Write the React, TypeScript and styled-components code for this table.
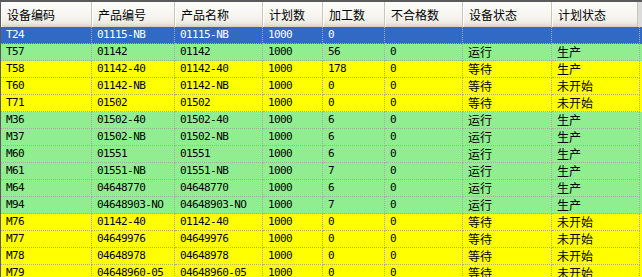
import React from "react";
import styled, { createGlobalStyle } from "styled-components";

const GlobalStyle = createGlobalStyle`
  html, body {
    margin: 0;
    padding: 0;
    background: #ffffff;
  }
`;

type Tone = "selected" | "run" | "wait";

interface Row {
  code: string;
  product: string;
  name: string;
  plan: string;
  done: string;
  bad: string;
  device: string;
  state: string;
  tone: Tone;
}

const COLS = "91px 83px 88px 60px 62px 78px 89px 88px";

const rows: Row[] = [
  { code: "T24", product: "01115-NB", name: "01115-NB", plan: "1000", done: "0", bad: "", device: "", state: "", tone: "selected" },
  { code: "T57", product: "01142", name: "01142", plan: "1000", done: "56", bad: "0", device: "运行", state: "生产", tone: "run" },
  { code: "T58", product: "01142-40", name: "01142-40", plan: "1000", done: "178", bad: "0", device: "等待", state: "生产", tone: "wait" },
  { code: "T60", product: "01142-NB", name: "01142-NB", plan: "1000", done: "0", bad: "0", device: "等待", state: "未开始", tone: "wait" },
  { code: "T71", product: "01502", name: "01502", plan: "1000", done: "0", bad: "0", device: "等待", state: "未开始", tone: "wait" },
  { code: "M36", product: "01502-40", name: "01502-40", plan: "1000", done: "6", bad: "0", device: "运行", state: "生产", tone: "run" },
  { code: "M37", product: "01502-NB", name: "01502-NB", plan: "1000", done: "6", bad: "0", device: "运行", state: "生产", tone: "run" },
  { code: "M60", product: "01551", name: "01551", plan: "1000", done: "6", bad: "0", device: "运行", state: "生产", tone: "run" },
  { code: "M61", product: "01551-NB", name: "01551-NB", plan: "1000", done: "7", bad: "0", device: "运行", state: "生产", tone: "run" },
  { code: "M64", product: "04648770", name: "04648770", plan: "1000", done: "6", bad: "0", device: "运行", state: "生产", tone: "run" },
  { code: "M94", product: "04648903-NO", name: "04648903-NO", plan: "1000", done: "7", bad: "0", device: "运行", state: "生产", tone: "run" },
  { code: "M76", product: "01142-40", name: "01142-40", plan: "1000", done: "0", bad: "0", device: "等待", state: "未开始", tone: "wait" },
  { code: "M77", product: "04649976", name: "04649976", plan: "1000", done: "0", bad: "0", device: "等待", state: "未开始", tone: "wait" },
  { code: "M78", product: "04648978", name: "04648978", plan: "1000", done: "0", bad: "0", device: "等待", state: "未开始", tone: "wait" },
  { code: "M79", product: "04648960-05", name: "04648960-05", plan: "1000", done: "0", bad: "0", device: "等待", state: "未开始", tone: "wait" },
];

const headers = ["设备编码", "产品编号", "产品名称", "计划数", "加工数", "不合格数", "设备状态", "计划状态"];

const toneBg: Record<Tone, string> = {
  selected: "#316ac5",
  run: "#90ee90",
  wait: "#ffff00",
};

const Grid = styled.div`
  width: 641px;
  height: 275px;
  overflow: hidden;
  background: #dcdcdc;
  border-top: 2px solid #5a5a5a;
  border-left: 1px solid #5a5a5a;
`;

const HeaderRow = styled.div`
  display: grid;
  grid-template-columns: ${COLS};
  height: 25px;
`;

const HeaderCell = styled.div<{ $last?: boolean }>`
  display: flex;
  align-items: center;
  padding-left: 6px;
  margin-right: ${(p) => (p.$last ? "2px" : "0")};
  font-family: "Noto Sans CJK SC", sans-serif;
  font-size: 12px;
  color: #000;
  background: linear-gradient(#fdfdfb 0%, #f5f4ee 60%, #ecebe3 84%, #e2dfd0 92%, #d3cfbe 100%);
  border-right: 1px solid #c9c6b6;
  box-shadow: inset 1px 0 0 #ffffff;
  white-space: nowrap;
`;

const BodyRow = styled.div<{ $tone: Tone }>`
  display: grid;
  grid-template-columns: ${COLS};
  height: 17px;
  background: ${(p) => toneBg[p.$tone]};
  color: ${(p) => (p.$tone === "selected" ? "#ffffff" : "#000000")};
`;

const Cell = styled.div<{ $cjk?: boolean }>`
  display: flex;
  align-items: center;
  padding: 0 0 1px 5px;
  border-right: 1px dotted #a9a9a9;
  border-bottom: 1px dotted #a9a9a9;
  font-family: ${(p) =>
    p.$cjk ? `"Noto Sans CJK SC", sans-serif` : `"DejaVu Sans Mono", "Noto Sans CJK SC", monospace`};
  font-size: ${(p) => (p.$cjk ? "12px" : "11px")};
  letter-spacing: ${(p) => (p.$cjk ? "0" : "-0.6px")};
  white-space: nowrap;
  overflow: hidden;
`;

export default function App() {
  return (
    <>
      <GlobalStyle />
      <Grid>
        <HeaderRow>
          {headers.map((h, i) => (
            <HeaderCell key={h} $last={i === headers.length - 1}>
              {h}
            </HeaderCell>
          ))}
        </HeaderRow>
        {rows.map((r) => (
          <BodyRow key={r.code} $tone={r.tone}>
            <Cell>{r.code}</Cell>
            <Cell>{r.product}</Cell>
            <Cell>{r.name}</Cell>
            <Cell>{r.plan}</Cell>
            <Cell>{r.done}</Cell>
            <Cell>{r.bad}</Cell>
            <Cell $cjk>{r.device}</Cell>
            <Cell $cjk>{r.state}</Cell>
          </BodyRow>
        ))}
      </Grid>
    </>
  );
}
